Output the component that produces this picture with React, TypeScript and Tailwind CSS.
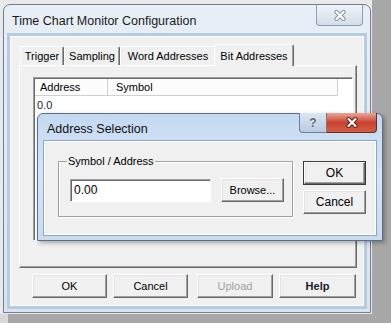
import React from "react";

const raised =
  "border border-t-white border-l-white border-r-[#696969] border-b-[#696969] shadow-[inset_-1px_-1px_0_#a0a0a0,inset_1px_1px_0_#e3e3e3] bg-[#f0f0f0]";
const sunken =
  "border border-t-[#a0a0a0] border-l-[#a0a0a0] border-r-white border-b-white shadow-[inset_1px_1px_0_#696969]";

function XGlyph({ outline }: { outline: string }) {
  return (
    <svg width="12" height="11" viewBox="0 0 12 11">
      <path d="M2.5 2 L9.5 9 M9.5 2 L2.5 9" stroke={outline} strokeWidth="4.2" strokeLinecap="round" fill="none" />
      <path d="M2.5 2 L9.5 9 M9.5 2 L2.5 9" stroke="#fff" strokeWidth="2.2" strokeLinecap="round" fill="none" />
    </svg>
  );
}

function Tab({ label, w }: { label: string; w: string }) {
  return (
    <div
      className={`${w} h-[19px] flex items-center justify-center rounded-t-[2px] border-t border-l border-r border-t-white border-l-white border-r-[#696969] shadow-[inset_-1px_0_0_#a0a0a0] leading-[14px]`}
    >
      {label}
    </div>
  );
}

function Button({ label, w, className = "" }: { label: string; w: string; className?: string }) {
  return (
    <div className={`${raised} ${w} h-[24px] flex items-center justify-center leading-[14px] ${className}`}>
      {label}
    </div>
  );
}

export default function App() {
  return (
    <div className="relative w-[391px] h-[323px] overflow-hidden bg-[#a7a7a7] font-['Liberation_Sans',Arial,sans-serif] text-[11px] text-black">
      <div className="w-[372px] h-[314px] bg-[#e9e9e9] pl-[3px] pt-[4px]">
        {/* main window */}
        <div className="w-[368px] h-[309px] rounded-t-[7px] border border-[#6f7e90] bg-gradient-to-b from-[#e7eef6] to-[#d9e3ee] flex flex-col px-[3px] pb-[3px]">
          <div className="h-[28px] flex items-start">
            <span className="pl-[5px] pt-[9px] text-[12.5px] leading-[15px] text-[#1b1b1b]">
              Time Chart Monitor Configuration
            </span>
            <div className="ml-auto mr-[4px] w-[47px] h-[21px] rounded-b-[4px] border border-t-0 border-[#8e9db0] bg-gradient-to-b from-[#eef3f8] to-[#d3dde9] flex items-center justify-center">
              <XGlyph outline="#8b96a3" />
            </div>
          </div>
          <div className="flex-1 border-[3px] border-[#b6cbe2]">
            <div className="h-full border border-white bg-[#f0f0f0] flex flex-col">
              {/* tabs */}
              <div className="mt-[7px] ml-[9px] h-[21px] flex items-end">
                <Tab label="Trigger" w="w-[44px]" />
                <Tab label="Sampling" w="w-[56px]" />
                <Tab label="Word Addresses" w="w-[96px]" />
                <div className="relative z-10 -mx-[2px] -mb-px w-[80px] h-[22px] flex items-center justify-center rounded-t-[2px] border-t border-l border-r border-t-white border-l-white border-r-[#696969] shadow-[inset_-1px_0_0_#a0a0a0] bg-[#f0f0f0] leading-[14px]">
                  Bit Addresses
                </div>
              </div>
              {/* tab page */}
              <div className="ml-[8px] w-[338px] h-[203px] border border-t-white border-l-white border-r-[#696969] border-b-[#696969] shadow-[inset_-1px_-1px_0_#a0a0a0] pt-[11px] pl-[13px]">
                <div className={`${sunken} w-[320px] h-[164px] bg-white pl-[1px] pt-[1px]`}>
                  <div className="flex h-[17px] leading-[16px]">
                    <div className="w-[73px] pl-[5px] border-r border-b border-[#d0d0d0] bg-[#fcfcfc]">Address</div>
                    <div className="w-[230px] pl-[8px] border-r border-b border-[#d0d0d0] bg-[#fcfcfc]">Symbol</div>
                  </div>
                  <div className="pl-[2px] pt-[3px] leading-[13px] text-[#222]">0.0</div>
                </div>
              </div>
              {/* bottom buttons */}
              <div className="mt-[6px] flex">
                <Button label="OK" w="w-[75px]" className="ml-[21px]" />
                <Button label="Cancel" w="w-[75px]" className="ml-[6px]" />
                <Button label="Upload" w="w-[76px]" className="ml-[9px] text-[#a0a0a0]" />
                <Button label="Help" w="w-[77px]" className="ml-[6px] font-bold text-[#1a1a2a]" />
              </div>
            </div>
          </div>
        </div>
      </div>
      <div className="flex h-[9px]">
        <div className="w-[8px] bg-[#d8d8d8]" />
      </div>

      {/* Address Selection dialog */}
      <div className="absolute left-[37px] top-[113px] w-[346px] h-[128px] rounded-t-[6px] border border-[#5b6e86] bg-gradient-to-b from-[#c4d9f1] via-[#d6e5f6] to-[#c9dbef] px-[5px] pb-[4px] flex flex-col shadow-[2px_2px_4px_rgba(0,0,0,0.3)]">
        <div className="h-[26px] flex items-start">
          <span className="pl-[4px] pt-[8px] text-[12.5px] leading-[15px] text-[#111]">Address Selection</span>
          <div className="ml-auto -mt-px flex">
            <div className="w-[28px] h-[20px] rounded-bl-[4px] border border-t-0 border-[#6d7f95] bg-gradient-to-b from-[#dbe6f2] to-[#b9cbe0] flex items-center justify-center">
              <span className="text-[12px] font-bold leading-[14px] text-[#5a6778] [text-shadow:0_0_2px_#fff]">?</span>
            </div>
            <div className="w-[50px] h-[20px] rounded-br-[4px] border border-l-0 border-t-0 border-[#6a2a22] bg-gradient-to-b from-[#e9a598] via-[#c7412f] to-[#d45c44] flex items-center justify-center">
              <XGlyph outline="#6d1c12" />
            </div>
          </div>
        </div>
        <div className="flex-1 border border-[#8ca6c4]">
          <div className="h-full border border-white bg-[#f0f0f0] flex items-start">
            {/* group box */}
            <div className="relative ml-[13px] mt-[19px] w-[235px] h-[56px] border border-[#a0a0a0] shadow-[inset_1px_1px_0_#fff,1px_1px_0_#fff] flex items-start">
              <span className="absolute left-[8px] -top-[8px] px-[1px] bg-[#f0f0f0] leading-[14px]">Symbol / Address</span>
              <div className={`${sunken} ml-[11px] mt-[17px] w-[141px] h-[23px] bg-white pl-[3px] text-[12px] leading-[20px]`}>0.00</div>
              <Button label="Browse..." w="w-[63px]" className="ml-[10px] mt-[16px]" />
            </div>
            {/* action buttons */}
            <div className="ml-[10px] mt-[19px] w-[63px] flex flex-col">
              <div className="border border-[#3a3a3a]">
                <div className={`${raised} h-[22px] flex items-center justify-center leading-[14px] text-[12px]`}>OK</div>
              </div>
              <Button label="Cancel" w="w-[63px]" className="mt-[5px] h-[23px] text-[12px]" />
            </div>
          </div>
        </div>
      </div>
    </div>
  );
}
